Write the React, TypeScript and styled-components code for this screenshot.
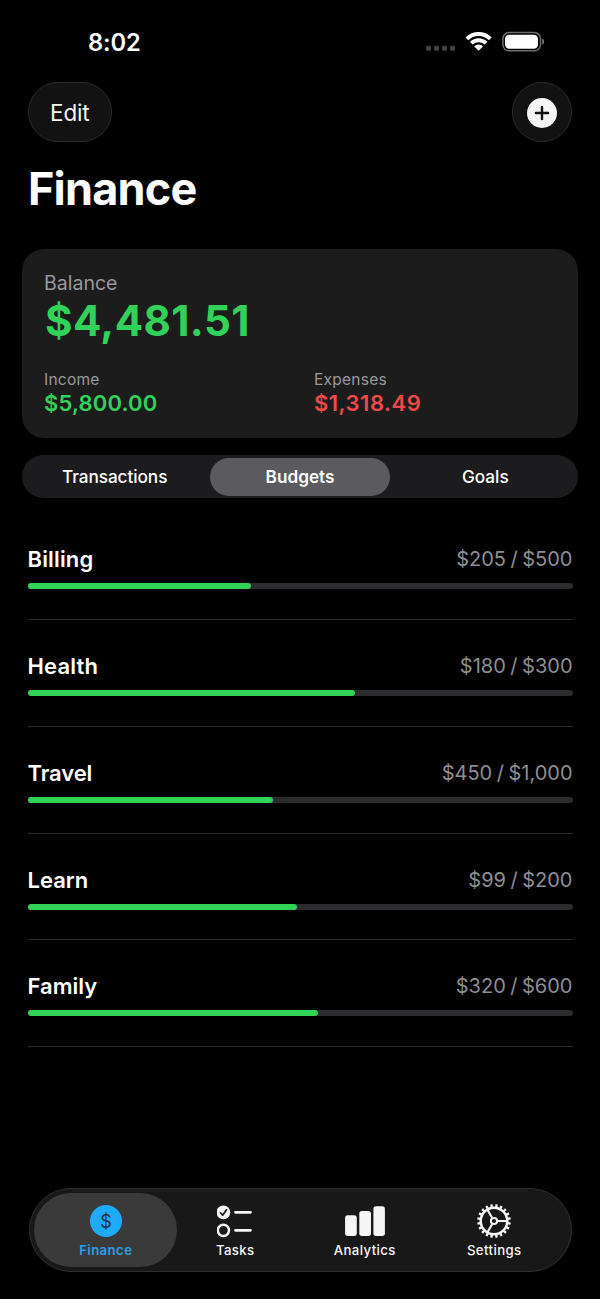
import React from "react";
import styled, { createGlobalStyle } from "styled-components";

const GlobalStyle = createGlobalStyle`
  * { box-sizing: border-box; }
  body { margin: 0; background: #000; }
`;

const Screen = styled.main`
  width: 600px;
  height: 1299px;
  display: flex;
  flex-direction: column;
  overflow: hidden;
  background: #000;
  color: #fff;
  font-family: Inter, "Liberation Sans", sans-serif;
`;

const Text = styled.span<{ $size: number; $line: number; $weight?: number; $spacing?: number; $color?: string }>`
  display: block;
  white-space: nowrap;
  font-size: ${(p) => p.$size}px;
  line-height: ${(p) => p.$line}px;
  font-weight: ${(p) => p.$weight ?? 400};
  letter-spacing: ${(p) => p.$spacing ?? 0}px;
  color: ${(p) => p.$color ?? "#fff"};
`;

const Amount = styled(Text)`
  word-spacing: -1.1px;
`;

const StatusBar = styled.header`
  height: 82px;
  padding: 27px 55px 0 88px;
  display: flex;
  justify-content: space-between;
  align-items: flex-start;
`;

const StatusIcons = styled.svg`
  display: block;
`;

const Toolbar = styled.div`
  height: 60px;
  padding: 0 28px 0 27.5px;
  display: flex;
  justify-content: space-between;
`;

const GlassButton = styled.button<{ $width: number }>`
  width: ${(p) => p.$width}px;
  height: 60px;
  padding: 1px 0 0;
  display: flex;
  align-items: center;
  justify-content: center;
  border: 1px solid #2b2b2b;
  border-radius: 30px;
  background: #121212;
  font-family: inherit;
`;

const Title = styled.h1`
  margin: 20px 0 0 28px;
  font-size: 45px;
  line-height: 54px;
  font-weight: 700;
  letter-spacing: -0.8px;
`;

const Card = styled.section`
  height: 189px;
  margin: 33px 22px 0;
  padding: 22px 22px 0;
  border-radius: 22px;
  background: #1c1c1c;
`;

const Balance = styled(Text)`
  margin: 1px 0 0 1px;
`;

const Totals = styled.div`
  display: grid;
  grid-template-columns: 270px 1fr;
  margin-top: 24px;
`;

const TotalValue = styled(Text)`
  margin-top: -1px;
`;

const Segments = styled.div`
  height: 43px;
  margin: 17px 22px 0;
  padding: 2.5px 0;
  display: grid;
  grid-template-columns: repeat(3, 1fr);
  border-radius: 21.5px;
  background: #1c1c1e;
`;

const Segment = styled.button<{ $active?: boolean }>`
  margin: 0 2.7px;
  padding: 0;
  display: flex;
  align-items: center;
  justify-content: center;
  border: 0;
  border-radius: 19px;
  background: ${(p) => (p.$active ? "#5b5b5f" : "transparent")};
  font-family: inherit;
`;

const BudgetList = styled.ul`
  list-style: none;
  margin: 15.2px 27.5px 0;
  padding: 0;
`;

const BudgetRow = styled.li`
  height: 106.8px;
  padding-top: 32px;
  border-bottom: 1px solid #2a2a2c;
`;

const BudgetHead = styled.div`
  display: flex;
  justify-content: space-between;
`;

const Track = styled.div`
  height: 6px;
  margin-top: 10px;
  border-radius: 3px;
  background: #2c2c2e;
`;

const Fill = styled.div`
  height: 100%;
  border-radius: 3px;
  background: #32d158;
`;

const TabBar = styled.nav`
  width: 543px;
  height: 84px;
  margin: auto 0 27px 28.5px;
  padding: 4px 11px;
  display: grid;
  grid-template-columns: repeat(4, 129.5px);
  border: 1px solid #2e2e2e;
  border-radius: 42px;
  background: #181818;
`;

const Tab = styled.button<{ $active?: boolean }>`
  height: 74px;
  margin: 0 -6.5px;
  padding: 10px 0 0 1px;
  display: flex;
  flex-direction: column;
  align-items: center;
  gap: 3px;
  border: 0;
  border-radius: 37px;
  background: ${(p) => (p.$active ? "#3a3a3a" : "transparent")};
  font-family: inherit;
`;

const StatusGlyphs = () => (
  <StatusIcons width="120" height="30" viewBox="425 27 120 30">
    {[426, 434, 442, 450].map((x) => (
      <rect key={x} x={x} y="45.8" width="5" height="5" rx="1.6" fill="#424242" />
    ))}
    <g fill="none" stroke="#fff" strokeWidth="4">
      <path d="M466.9 38.8a16.6 16.6 0 0 1 23.4 0" />
      <path d="M471.3 43.2a10.4 10.4 0 0 1 14.7 0" />
    </g>
    <path d="M474.2 46.4a6.2 6.2 0 0 1 8.8 0l-4.4 4.3z" fill="#fff" />
    <rect x="502.9" y="32.6" width="37.6" height="18.2" rx="6" fill="none" stroke="#6c6c6c" strokeWidth="1.5" />
    <rect x="505" y="34.7" width="33" height="14" rx="4.2" fill="#fff" />
    <path d="M542.2 38.6v6.2c2.6-1 2.6-5.2 0-6.2z" fill="#777" />
  </StatusIcons>
);

const PlusIcon = () => (
  <svg width="30" height="30" viewBox="0 0 30 30">
    <circle cx="15" cy="15" r="15" fill="#f5f5f5" />
    <path d="M15 8.9v12.2M8.9 15h12.2" stroke="#111" strokeWidth="2.4" strokeLinecap="round" />
  </svg>
);

const FinanceIcon = () => (
  <svg width="36" height="36" viewBox="-18 -18 36 36">
    <circle r="16" fill="#1fabfc" />
    <text y="6.5" textAnchor="middle" fontFamily="Inter, sans-serif" fontSize="18" fontWeight="400" fill="#27333b">
      $
    </text>
  </svg>
);

const TasksIcon = () => (
  <svg width="36" height="36" viewBox="217.3 1202.7 36 36">
    <circle cx="223.7" cy="1212" r="6.9" fill="#f5f5f5" />
    <path d="M220.8 1212.5l2.2 2.4 3.8-5.4" fill="none" stroke="#181818" strokeWidth="1.7" strokeLinecap="round" strokeLinejoin="round" />
    <circle cx="223.7" cy="1230" r="5.6" fill="none" stroke="#f5f5f5" strokeWidth="2.5" />
    <path d="M235.8 1212h15M235.8 1230h15" stroke="#f5f5f5" strokeWidth="2.8" strokeLinecap="round" />
  </svg>
);

const AnalyticsIcon = () => (
  <svg width="40" height="36" viewBox="345 1202.7 40 36">
    <g fill="#f5f5f5">
      <rect x="345.1" y="1215" width="11.7" height="20.6" rx="2.6" />
      <rect x="359.3" y="1210.7" width="11.7" height="24.9" rx="2.6" />
      <rect x="373.4" y="1206" width="11.5" height="29.6" rx="2.6" />
    </g>
  </svg>
);

const TEETH = Array.from({ length: 20 }, (_, i) => i * 18 + 9);

const SettingsIcon = () => (
  <svg width="36" height="36" viewBox="-18 -18 36 36">
    <g fill="none" stroke="#f5f5f5">
      <circle r="13.3" strokeWidth="2.5" />
      <circle r="3.1" strokeWidth="2" />
      {[0, 120, 240].map((a) => (
        <path key={a} d="M3.8 0H13" strokeWidth="2.1" transform={`rotate(${a})`} />
      ))}
      {TEETH.map((a) => (
        <path key={a} d="M13.8 0H16.8" strokeWidth="2.4" transform={`rotate(${a})`} />
      ))}
    </g>
  </svg>
);

const GREEN = "#32d15a";
const GREY = "#98989c";

const budgets = [
  { name: "Billing", spent: 205, limit: 500, spacing: 0.15 },
  { name: "Health", spent: 180, limit: 300, spacing: 0.15 },
  { name: "Travel", spent: 450, limit: 1000, spacing: -0.1 },
  { name: "Learn", spent: 99, limit: 200, spacing: 0 },
  { name: "Family", spent: 320, limit: 600, spacing: 0 },
];

const tabs = [
  { label: "Finance", Icon: FinanceIcon },
  { label: "Tasks", Icon: TasksIcon },
  { label: "Analytics", Icon: AnalyticsIcon },
  { label: "Settings", Icon: SettingsIcon },
];

export default function App() {
  return (
    <Screen>
      <GlobalStyle />
      <StatusBar>
        <Text $size={23.7} $line={31} $weight={600} $spacing={-0.1}>8:02</Text>
        <StatusGlyphs />
      </StatusBar>
      <Toolbar>
        <GlassButton $width={84.5}>
          <Text $size={22.5} $line={28} $spacing={-0.2} $color="#f5f5f5">Edit</Text>
        </GlassButton>
        <GlassButton $width={60} aria-label="Add">
          <PlusIcon />
        </GlassButton>
      </Toolbar>
      <Title>Finance</Title>
      <Card>
        <Text $size={19.5} $line={24} $color={GREY}>Balance</Text>
        <Balance $size={42} $line={50} $weight={700} $spacing={0.4} $color={GREEN}>$4,481.51</Balance>
        <Totals>
          <div>
            <Text $size={15.6} $line={20} $spacing={0.2} $color={GREY}>Income</Text>
            <TotalValue $size={22} $line={28} $weight={600} $spacing={0.15} $color={GREEN}>$5,800.00</TotalValue>
          </div>
          <div>
            <Text $size={15.6} $line={20} $spacing={0.2} $color={GREY}>Expenses</Text>
            <TotalValue $size={22} $line={28} $weight={600} $spacing={0.5} $color="#f24848">$1,318.49</TotalValue>
          </div>
        </Totals>
      </Card>
      <Segments>
        <Segment><Text $size={17.2} $line={24} $weight={500} $spacing={-0.05}>Transactions</Text></Segment>
        <Segment $active><Text $size={17.2} $line={24} $weight={600}>Budgets</Text></Segment>
        <Segment><Text $size={17.2} $line={24} $weight={500}>Goals</Text></Segment>
      </Segments>
      <BudgetList>
        {budgets.map((b) => (
          <BudgetRow key={b.name}>
            <BudgetHead>
              <Text $size={22} $line={28} $weight={600} $spacing={b.spacing}>{b.name}</Text>
              <Amount $size={20} $line={28} $color="#8e8e92">
                {`$${b.spent} / $${b.limit.toLocaleString("en-US")}`}
              </Amount>
            </BudgetHead>
            <Track>
              <Fill style={{ width: `${(b.spent / b.limit) * 100}%` }} />
            </Track>
          </BudgetRow>
        ))}
      </BudgetList>
      <TabBar>
        {tabs.map(({ label, Icon }, i) => (
          <Tab key={label} $active={i === 0}>
            <Icon />
            <Text $size={13.2} $line={16} $weight={i === 0 ? 600 : 500} $spacing={0.4} $color={i === 0 ? "#289fe6" : "#f5f5f5"}>
              {label}
            </Text>
          </Tab>
        ))}
      </TabBar>
    </Screen>
  );
}
